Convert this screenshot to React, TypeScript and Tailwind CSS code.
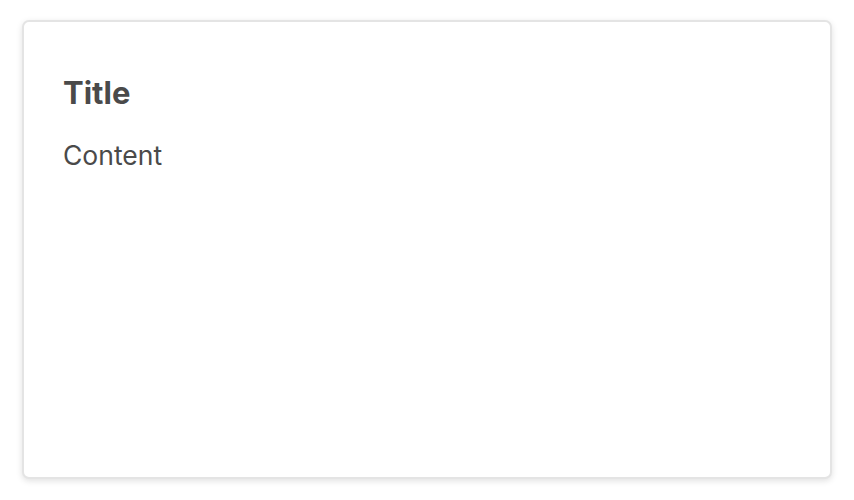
export default function App() {
  return (
    <div className="min-h-[500px] bg-white px-[22px] pt-[20px] font-['Inter',sans-serif] text-[#4a4a4a]">
      <div className="h-[459px] rounded-[7px] border-2 border-[#e4e4e4] bg-white px-[39px] pt-[51px] shadow-[0_2px_6px_rgba(0,0,0,0.12)]">
        <h2 className="text-[31px] font-bold leading-[40px]">Title</h2>
        <p className="mt-[24px] text-[26.5px] leading-[36px]">Content</p>
      </div>
    </div>
  );
}
